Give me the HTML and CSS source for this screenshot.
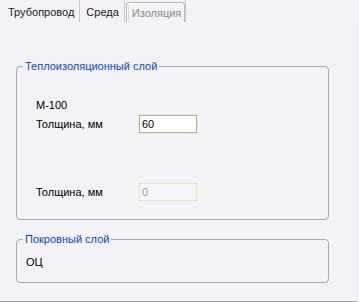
FILE: index.html
```html
<!DOCTYPE html>
<html lang="ru">
<head>
<meta charset="utf-8">
<link rel="stylesheet" href="styles.css">
</head>
<body>
<div class="window">
  <div class="tabs">
    <div class="tab">Трубопровод</div>
    <div class="sep"></div>
    <div class="tab">Среда</div>
    <div class="sep"></div>
    <div class="tab tab-current">Изоляция</div>
    <div class="sep"></div>
  </div>
  <div class="page">
    <fieldset class="group group-insul">
      <legend class="legend">Теплоизоляционный слой</legend>
      <div class="label mat">М-100</div>
      <div class="row">
        <span class="label">Толщина, мм</span>
        <span class="field"><span class="field-inner">60</span></span>
      </div>
      <div class="row row-second">
        <span class="label">Толщина, мм</span>
        <span class="field field-disabled"><span class="field-inner">0</span></span>
      </div>
    </fieldset>
    <fieldset class="group group-cover">
      <legend class="legend">Покровный слой</legend>
      <div class="label cover">ОЦ</div>
    </fieldset>
  </div>
</div>
</body>
</html>
```
FILE: styles.css
```css
* { box-sizing: border-box; }
html, body {
  margin: 0;
  padding: 0;
  background: #f2f2f7;
}
body {
  font-family: "Liberation Sans", Arial, sans-serif;
  font-size: 11px;
  color: #000;
}
.window {
  width: 359px;
  height: 302px;
  display: flex;
  flex-direction: column;
}
.tabs {
  height: 22px;
  display: flex;
  align-items: stretch;
  padding-left: 8px;
}
.tab {
  display: flex;
  align-items: center;
  line-height: 14px;
  padding-top: 2px;
  color: #222;
}
.sep {
  width: 1px;
  background: #c9c9cf;
  margin: 0 6px 0 5px;
}
.tab-current {
  margin-top: 2px;
  margin-left: -5px;
  margin-right: -5px;
  padding: 0 3px 0 5px;
  border: 1px solid #b9b9bf;
  border-bottom: none;
  border-radius: 3px 3px 0 0;
  box-shadow: inset 1px 1px 0 #ffffff, inset 2px 0 0 #d6d6dc;
  background: #f2f2f7;
  color: #8c8c8c;
}
.page {
  flex: 1;
  border-bottom: 1px solid #a5a5ab;
  border-right: 1px solid #ececf1;
  margin-right: 1px;
  padding: 37px 0 0 16px;
  display: flex;
  flex-direction: column;
}
.group {
  margin: 0;
  width: 313px;
  border: 1px solid #a6abb0;
  border-radius: 4px;
  padding: 0 0 0 6px;
  min-width: 0;
}
.legend {
  color: #0a46d5;
  padding: 0 2px;
  line-height: 14px;
}
.group-insul {
  height: 161px;
  padding-top: 25px;
}
.group-cover {
  margin-top: 12px;
  height: 51px;
  padding-top: 9px;
}
.label {
  line-height: 14px;
}
.mat {
  margin-left: 13px;
}
.row {
  margin-left: 13px;
  display: flex;
  align-items: center;
  height: 20px;
  margin-top: 2px;
}
.row-second {
  margin-top: 48px;
}
.row .label {
  width: 102px;
}
.field {
  width: 60px;
  height: 20px;
  border: 1px solid #ecead8;
  display: block;
}
.field-inner {
  display: block;
  height: 18px;
  border: 1px solid #a8afb4;
  background: #fff;
  padding-left: 2px;
  line-height: 16px;
}
.field-disabled {
  border-color: #f2f2f7;
}
.field-disabled .field-inner {
  border-color: #e2e0cf;
  background: #f5f5f8;
  color: #a0a0a0;
}
.cover {
  margin-left: 3px;
}
```
